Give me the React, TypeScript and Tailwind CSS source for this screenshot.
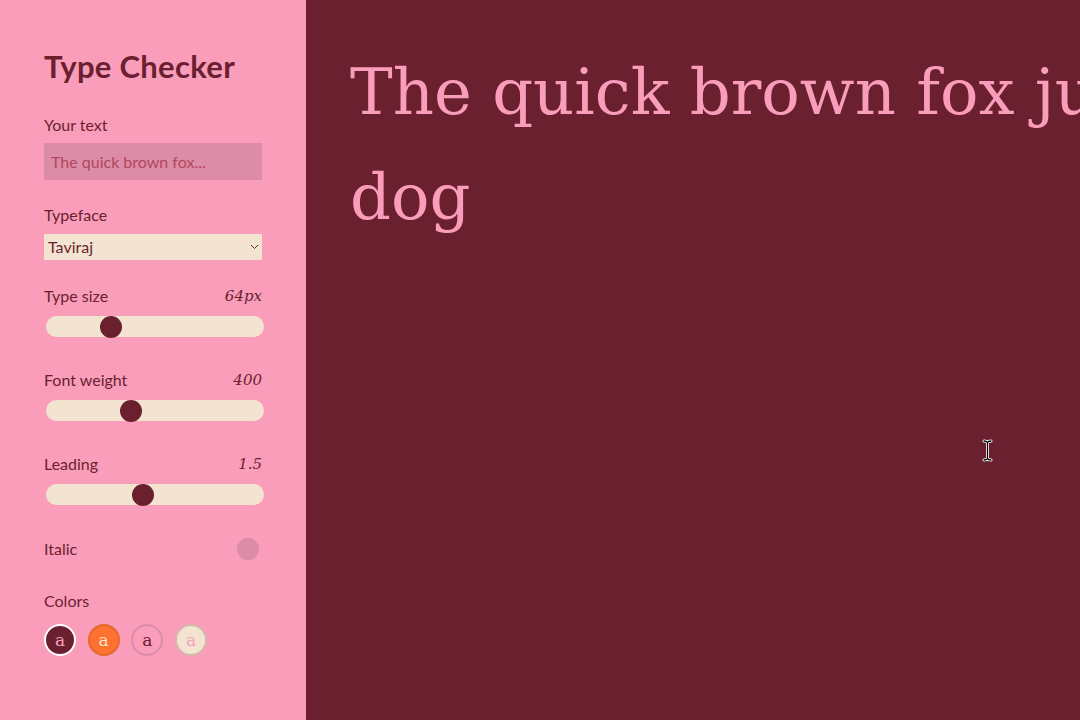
import React from "react";

const sliders = [
  { label: "Type size", value: "64px", min: 12, max: 200, v: 64 },
  { label: "Font weight", value: "400", min: 100, max: 900, v: 400 },
  { label: "Leading", value: "1.5", min: 0.8, max: 2.4, v: 1.5 },
];

const swatches = [
  { bg: "bg-[#6b2030]", border: "border-white", text: "text-[#f99dbb]" },
  { bg: "bg-[#ff7130]", border: "border-[#e3672d]", text: "text-[#fde3cf]" },
  { bg: "bg-[#f99dbb]", border: "border-[#dc8ca7]", text: "text-[#6b2030]" },
  { bg: "bg-[#f2e4d0]", border: "border-[#d8b7aa]", text: "text-[#f99dbb]" },
];

function Slider({ label, value, min, max, v }: { label: string; value: string; min: number; max: number; v: number }) {
  const pct = (v - min) / (max - min);
  return (
    <div className="flex flex-col">
      <div className="flex h-[20px] items-center justify-between">
        <span className="text-[16px] leading-[20px]">{label}</span>
        <span className="text-[15px] italic leading-[20px]" style={{ fontFamily: '"DejaVu Serif", serif' }}>
          {value}
        </span>
      </div>
      <div className="relative ml-[2px] mt-[10px] h-[21px] w-full rounded-full bg-[#f2e4d0]">
        <div
          className="absolute top-[-0.5px] h-[22px] w-[22px] rounded-full bg-[#6b2030]"
          style={{ left: `${pct * 197}px` }}
        />
      </div>
    </div>
  );
}

export default function App() {
  return (
    <div className="flex h-screen w-full overflow-hidden">
      <aside
        className="flex w-[306px] shrink-0 flex-col bg-[#f99dbb] px-[44px] pt-[48px] text-[#6b1f2f]"
        style={{ fontFamily: 'Lato, "Liberation Sans", sans-serif' }}
      >
        <h1 className="text-[31px] font-bold leading-[36px] tracking-[0.3px]">Type Checker</h1>

        <label className="mt-[31px] text-[16px] leading-[20px]">Your text</label>
        <div className="mt-[8px] flex h-[37px] items-center bg-[#dc8ca6] px-[7px]">
          <span className="text-[16px] text-[#b2475f]">The quick brown fox...</span>
        </div>

        <label className="mt-[25px] text-[16px] leading-[20px]">Typeface</label>
        <div className="mt-[9px] flex h-[26px] items-center justify-between bg-[#f2e4d0] pl-[4px] pr-[3px]">
          <span className="text-[16px] leading-[20px]">Taviraj</span>
          <svg width="9" height="6" viewBox="0 0 9 6">
            <path d="M1 1 L4.5 4.5 L8 1" stroke="#6b1f2f" strokeWidth="1" fill="none" />
          </svg>
        </div>

        <div className="mt-[26px] flex flex-col gap-[33px]">
          {sliders.map((s) => (
            <Slider key={s.label} {...s} />
          ))}
          <div className="flex h-[22px] items-center justify-between">
            <span className="text-[16px] leading-[20px]">Italic</span>
            <div className="mr-[3px] h-[22px] w-[22px] rounded-full bg-[#dc8ca6]" />
          </div>
        </div>

        <label className="mt-[31px] text-[16px] leading-[20px]">Colors</label>
        <div className="mt-[13px] flex gap-[11.7px]">
          {swatches.map((s, i) => (
            <div
              key={i}
              className={`flex h-[32px] w-[32px] items-center justify-center rounded-full border-2 ${s.bg} ${s.border} ${s.text}`}
            >
              <span className="mt-[1px] text-[17px] leading-none" style={{ fontFamily: '"DejaVu Serif", serif' }}>
                a
              </span>
            </div>
          ))}
        </div>
      </aside>

      <main className="relative flex-1 overflow-hidden bg-[#6b2030] pl-[44px] pt-[40px]">
        <p
          className="w-[1360px] text-[64px] leading-[105px] text-[#f99dbb]"
          style={{ fontFamily: '"DejaVu Serif", serif' }}
        >
          The quick brown fox jumps over the lazy dog
        </p>
        <svg className="absolute left-[676px] top-[439px]" width="11" height="23" viewBox="0 0 11 23">
          <path
            d="M2 2 C4 2 5 2.5 5.5 3.5 C6 2.5 7 2 9 2 M5.5 3.5 V19.5 M2 21 C4 21 5 20.5 5.5 19.5 C6 20.5 7 21 9 21"
            stroke="white"
            strokeWidth="3"
            fill="none"
            strokeLinecap="round"
          />
          <path
            d="M2 2 C4 2 5 2.5 5.5 3.5 C6 2.5 7 2 9 2 M5.5 3.5 V19.5 M2 21 C4 21 5 20.5 5.5 19.5 C6 20.5 7 21 9 21"
            stroke="black"
            strokeWidth="1.3"
            fill="none"
            strokeLinecap="round"
          />
        </svg>
      </main>
    </div>
  );
}
